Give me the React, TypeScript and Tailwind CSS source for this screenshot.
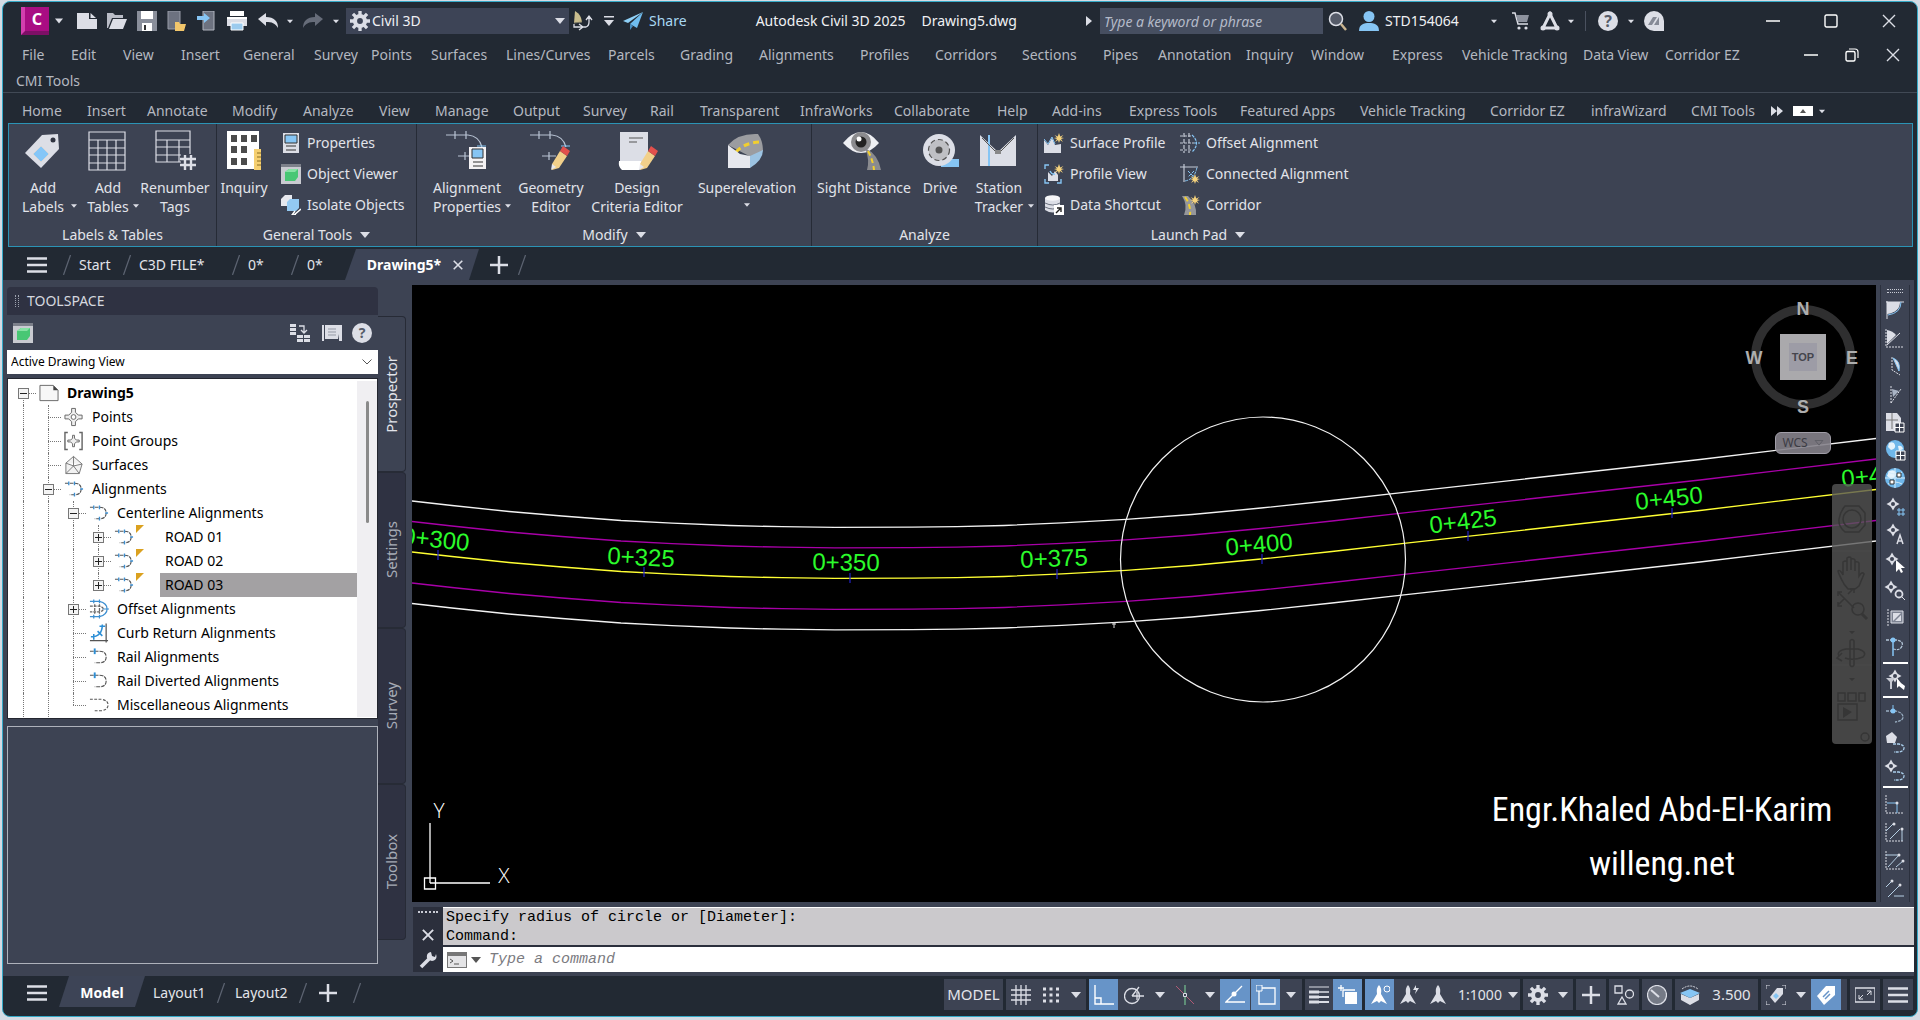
import React from "react";

type Kids = { children?: React.ReactNode };

const L = "#dcdee6";
const B = "#86c5f4";

function Svg({ box = "0 0 24 24", cls = "h-6 w-6", children }: Kids & { box?: string; cls?: string }) {
  return (
    <svg viewBox={box} className={`${cls} shrink-0`} fill="none" aria-hidden="true">
      {children}
    </svg>
  );
}

function Down({ cls = "w-2.5 h-1.5" }: { cls?: string }) {
  return (
    <svg viewBox="0 0 10 6" className={`${cls} shrink-0`} aria-hidden="true">
      <path d="M0 0H10L5 6Z" fill={L} />
    </svg>
  );
}

/* ---------- shared glyphs ---------- */

const Star = ({ x = 15, y = 5 }: { x?: number; y?: number }) => (
  <g transform={`translate(${x} ${y})`}>
    <path d="M0-5 1.2-1.6 4.4-3 2-.6 5 0 2 1 4 4 1 2 0 5-1 2-4 4-2 1-5 0-2-.6-4.4-3-1.2-1.6Z" fill="#f5d27c" />
  </g>
);

const Pt = ({ x, y }: { x: number; y: number }) => (
  <g transform={`translate(${x} ${y})`}>
    <path d="M0-6.500 2-3 3-2 6.500 0 3 2 2 3 0 6.500-2 3-3 2-6.500 0-3-2-2-3Z" fill={L} />
    <circle r="2" fill="#3d4353" />
  </g>
);

const Gear = ({ cls = "h-5 w-5" }: { cls?: string }) => (
  <Svg cls={cls}>
    <circle cx="12" cy="12" r="6" stroke={L} strokeWidth="5" />
    <path d="M12 0v5M12 19v5M0 12h5M19 12h5M3.500 3.500l3.600 3.600M16.900 16.900l3.600 3.600M20.500 3.500l-3.600 3.600M7.100 16.900l-3.600 3.600" stroke={L} strokeWidth="4" />
  </Svg>
);

const Burger = () => (
  <Svg box="0 0 20 16" cls="h-4 w-5">
    <path d="M0 1.500h20M0 8h20M0 14.500h20" stroke={L} strokeWidth="2.500" />
  </Svg>
);

const Plus = () => (
  <Svg box="0 0 18 18" cls="h-[18px] w-[18px]">
    <path d="M9 0v18M0 9h18" stroke={L} strokeWidth="2.500" />
  </Svg>
);

const Slash = () => (
  <Svg box="0 0 8 20" cls="h-5 w-2">
    <path d="M7.500 0 .5 20" stroke="#5d6472" strokeWidth="1.200" />
  </Svg>
);

const Close = ({ cls = "h-3.5 w-3.5", w = 1.4 }: { cls?: string; w?: number }) => (
  <Svg box="0 0 14 14" cls={cls}>
    <path d="M1 1l12 12M13 1 1 13" stroke={L} strokeWidth={w} />
  </Svg>
);

/* ---------- title bar ---------- */

function IconBtn({ label, w, children }: Kids & { label: string; w: string }) {
  return (
    <button aria-label={label} className={`flex h-full shrink-0 items-center justify-center ${w}`}>
      {children}
    </button>
  );
}

function TitleBar() {
  return (
    <header className="flex h-[38px] shrink-0 items-center text-sm text-[#f0f1f4]">
      <button aria-label="Application menu" className="ml-[18px] grid h-7 w-7 shrink-0 place-items-center border-b-4 border-l-4 border-b-[#7d0f66] border-l-[#d33fae] bg-[#a90d83] text-base font-bold leading-none text-white">
        C
      </button>
      <IconBtn label="Menu options" w="w-5"><Down cls="h-1.5 w-2" /></IconBtn>
      <IconBtn label="New" w="w-[30px] ml-[3px]">
        <Svg box="0 0 20 16" cls="h-4 w-5"><path d="M0 0h12v6h8v10H0Z" fill={L} /><path d="M13.500 0 19 5h-5.500Z" fill={L} /></Svg>
      </IconBtn>
      <IconBtn label="Open" w="w-[30px]">
        <Svg box="0 0 20 18" cls="h-[18px] w-5"><path d="M0 16V1h6l2 2h8v3H5L1 16Z" fill="#b9bcc6" /><path d="M6 7h14l-4 10H2Z" fill={L} /></Svg>
      </IconBtn>
      <IconBtn label="Save" w="w-[30px]">
        <Svg box="0 0 20 20" cls="h-5 w-5"><path d="M0 0h20v20H0Z" fill="#8a8f9b" /><path d="M4 0h12v8H4Z" fill="#fff" /><path d="M5 12h10v8H5Z" fill="#fff" /><path d="M7 14h2v5H7Z" fill="#333" /></Svg>
      </IconBtn>
      <IconBtn label="Open from web and mobile" w="w-[30px]">
        <Svg box="0 0 20 20" cls="h-5 w-5"><path d="M1 0h12v18H1Z" fill="#6d7280" stroke="#989ca8" /><path d="M8 11h4l1 2h6l-2 7H8Z" fill="#f2c66b" /></Svg>
      </IconBtn>
      <IconBtn label="Save to web and mobile" w="w-[30px]">
        <Svg box="0 0 20 20" cls="h-5 w-5"><path d="M6 0h11v19H6Z" fill="#6d7280" stroke="#b0b4be" /><path d="M0 5h7V2l6 5-6 5V9H0Z" fill={B} /></Svg>
      </IconBtn>
      <IconBtn label="Plot" w="w-[30px]">
        <Svg box="0 0 20 20" cls="h-5 w-5"><path d="M3 0h14v5H3Z" fill="#fff" /><path d="M0 6h20v9H0Z" fill={L} /><path d="M0 6h20v2H0Z" fill="#fff" /><path d="M4 12h12v7H4Z" fill="#9ccbee" stroke="#fff" /></Svg>
      </IconBtn>
      <IconBtn label="Undo" w="w-[32px]">
        <Svg box="0 0 20 16" cls="h-4 w-5"><path d="M0 6 8 0v4c8 0 12 4 12 11-3-5-6-6-12-6v4Z" fill={L} /></Svg>
      </IconBtn>
      <IconBtn label="Undo list" w="w-3"><Down cls="h-[5px] w-1.5" /></IconBtn>
      <IconBtn label="Redo" w="w-[34px]">
        <Svg box="0 0 20 16" cls="h-4 w-5"><path d="M20 6 12 0v4C4 4 0 8 0 15c3-5 6-6 12-6v4Z" fill="#666c79" /></Svg>
      </IconBtn>
      <IconBtn label="Redo list" w="w-3"><Down cls="h-[5px] w-1.5" /></IconBtn>
      <div className="relative ml-1 flex h-[26px] w-[223px] shrink-0 items-center bg-[#3d4456] pl-1">
        <Gear />
        <select aria-label="Workspace" className="h-full flex-1 appearance-none bg-transparent pl-0.5 text-sm text-[#f0f1f4]">
          <option>Civil 3D</option>
        </select>
        <span className="pointer-events-none absolute right-1"><Down /></span>
      </div>
      <IconBtn label="Customize north" w="w-7">
        <Svg box="0 0 20 20" cls="h-5 w-5"><path d="M2 0c5 3 6 6 7 11L1 12Z" fill="#c9bd8d" /><path d="M1 12l8-1" stroke="#7d7a66" /><path d="M1 13v3h8m-3-3 4 3-4 3M10 16h3q3-1 3-5V6m-3 3 3-4 3 4" stroke={L} strokeWidth="1.300" /></Svg>
      </IconBtn>
      <IconBtn label="Toolbar options" w="w-6">
        <Svg box="0 0 10 10" cls="h-2.5 w-2.5"><path d="M0 .8h10" stroke={L} strokeWidth="1.600" /><path d="M0 4h10L5 10Z" fill={L} /></Svg>
      </IconBtn>
      <button className="ml-0.5 flex shrink-0 items-center gap-1.5 text-[#a9d8f3]">
        <Svg box="0 0 20 18" cls="h-[18px] w-5"><path d="M20 0 0 9l5 2Z" fill="#8fd0f7" /><path d="M20 0 7 12l7 4Z" fill="#6fbdf0" /><path d="M7 12v6l3-4Z" fill="#4a90c4" /></Svg>
        Share
      </button>
      <div className="flex min-w-0 flex-1 items-center justify-center gap-4 whitespace-nowrap">
        <span>Autodesk Civil 3D 2025</span>
        <span>Drawing5.dwg</span>
      </div>
      <svg viewBox="0 0 6 10" className="mr-2 h-2.5 w-1.5 shrink-0" aria-hidden="true"><path d="M0 0v10l6-5Z" fill={L} /></svg>
      <input aria-label="Search help" placeholder="Type a keyword or phrase" className="h-[26px] w-[223px] shrink-0 bg-[#464e60] px-1 text-sm italic placeholder:text-[#b4bac8]" />
      <IconBtn label="Search" w="w-[30px]">
        <Svg box="0 0 20 20" cls="h-5 w-5"><circle cx="8" cy="8" r="6.500" fill="#555b69" stroke={L} strokeWidth="1.500" /><path d="m13 13 5 6" stroke="#c9b48f" strokeWidth="2.500" /></Svg>
      </IconBtn>
      <button className="flex w-36 shrink-0 items-center gap-1.5 pl-1.5">
        <Svg box="0 0 20 20" cls="h-5 w-5"><circle cx="10" cy="5.500" r="5.500" fill={B} /><path d="M0 20c0-7 5-8 10-8s10 1 10 8Z" fill={B} /></Svg>
        STD154064
        <span className="ml-auto"><Down cls="h-[5px] w-1.5" /></span>
      </button>
      <IconBtn label="App store" w="w-8 ml-2">
        <Svg box="0 0 18 18" cls="h-[18px] w-[18px]"><path d="M0 1h3l3 11h10" stroke={L} strokeWidth="1.500" /><path d="M4 3h13l-2 7H6Z" fill="#8d929e" /><circle cx="7" cy="16" r="1.600" fill={L} /><circle cx="14" cy="16" r="1.600" fill={L} /></Svg>
      </IconBtn>
      <IconBtn label="Autodesk" w="w-[26px]">
        <Svg box="0 0 20 20" cls="h-5 w-5"><path d="M10 3 17 17H3Z" stroke={L} strokeWidth="3" /><circle cx="10" cy="3" r="2.500" fill={L} /><circle cx="3" cy="17" r="2.500" fill={L} /><circle cx="17" cy="17" r="2.500" fill={L} /></Svg>
      </IconBtn>
      <IconBtn label="Autodesk options" w="w-4"><Down cls="h-[5px] w-1.5" /></IconBtn>
      <span className="mx-1.5 h-5 w-px bg-[#4a515f]" />
      <button aria-label="Help" className="ml-1.5 grid h-5 w-5 shrink-0 place-items-center rounded-full bg-[#dcdee6] text-base font-bold leading-none text-[#555b68]">?</button>
      <IconBtn label="Help options" w="w-[26px]"><Down cls="h-[5px] w-1.5" /></IconBtn>
      <button aria-label="Feedback" className="grid h-5 w-5 shrink-0 place-items-center rounded-full rounded-br-none bg-[#dcdee6]">
        <Svg box="0 0 12 8" cls="h-2 w-3"><path d="M0 8 5 0h4L4 8ZM6 8l5-8v8Z" fill="#858a96" /></Svg>
      </button>
      <IconBtn label="Minimize" w="ml-20 w-[58px]"><Svg box="0 0 14 14" cls="h-3.5 w-3.5"><path d="M0 7h14" stroke="#fff" strokeWidth="1.400" /></Svg></IconBtn>
      <IconBtn label="Maximize" w="w-[58px]"><Svg box="0 0 14 14" cls="h-3.5 w-3.5"><rect x="1" y="1" width="12" height="12" rx="1.500" stroke="#fff" strokeWidth="1.400" /></Svg></IconBtn>
      <IconBtn label="Close" w="w-[57px]"><Close /></IconBtn>
    </header>
  );
}

/* ---------- menus ---------- */

const MENUS: [string, string][] = [
  ["File", "w-[49px]"], ["Edit", "w-[52px]"], ["View", "w-[58px]"], ["Insert", "w-[62px]"], ["General", "w-[71px]"],
  ["Survey", "w-[57px]"], ["Points", "w-[60px]"], ["Surfaces", "w-[75px]"], ["Lines/Curves", "w-[102px]"], ["Parcels", "w-[72px]"],
  ["Grading", "w-[79px]"], ["Alignments", "w-[101px]"], ["Profiles", "w-[75px]"], ["Corridors", "w-[87px]"], ["Sections", "w-[81px]"],
  ["Pipes", "w-[55px]"], ["Annotation", "w-[88px]"], ["Inquiry", "w-[65px]"], ["Window", "w-[81px]"], ["Express", "w-[70px]"],
  ["Vehicle Tracking", "w-[121px]"], ["Data View", "w-[82px]"], ["Corridor EZ", "w-[90px]"],
];

function MenuBar() {
  return (
    <nav className="shrink-0 border-b border-[#414955] text-sm text-[#b4b8c0]">
      <div className="flex h-7 items-center pt-px pl-[19px]">
        {MENUS.map(([t, w]) => (
          <button key={t} className={`shrink-0 whitespace-nowrap text-left ${w}`}>{t}</button>
        ))}
        <div className="mr-1 ml-auto flex h-full shrink-0 items-center">
          <IconBtn label="Minimize drawing" w="w-10"><Svg box="0 0 14 14" cls="h-3.5 w-3.5"><path d="M0 7h14" stroke="#fff" strokeWidth="1.400" /></Svg></IconBtn>
          <IconBtn label="Restore drawing" w="w-[42px]"><Svg box="0 0 14 14" cls="h-3.5 w-3.5"><rect x="1" y="3.500" width="9" height="9.500" rx="1.500" stroke="#fff" strokeWidth="1.400" /><path d="M4 1h6q3 0 3 3v6" stroke="#fff" strokeWidth="1.200" /></Svg></IconBtn>
          <IconBtn label="Close drawing" w="w-10"><Close /></IconBtn>
        </div>
      </div>
      <div className="flex h-6 items-center pt-px pl-[13px]"><button>CMI Tools</button></div>
    </nav>
  );
}

const TABS: [string, string][] = [
  ["Home", "w-[65px]"], ["Insert", "w-[60px]"], ["Annotate", "w-[85px]"], ["Modify", "w-[71px]"], ["Analyze", "w-[76px]"],
  ["View", "w-[56px]"], ["Manage", "w-[78px]"], ["Output", "w-[70px]"], ["Survey", "w-[67px]"], ["Rail", "w-[50px]"],
  ["Transparent", "w-[100px]"], ["InfraWorks", "w-[94px]"], ["Collaborate", "w-[103px]"], ["Help", "w-[55px]"], ["Add-ins", "w-[77px]"],
  ["Express Tools", "w-[111px]"], ["Featured Apps", "w-[120px]"], ["Vehicle Tracking", "w-[130px]"], ["Corridor EZ", "w-[101px]"],
  ["infraWizard", "w-[100px]"], ["CMI Tools", "w-[80px]"],
];

function RibbonTabs() {
  return (
    <nav className="flex h-[30px] shrink-0 items-center pt-1.5 pl-[19px] text-sm text-[#b4b8c0]">
      {TABS.map(([t, w]) => (
        <button key={t} className={`shrink-0 whitespace-nowrap text-left ${w}`}>{t}</button>
      ))}
      <button aria-label="More tabs" className="flex items-center">
        <Svg box="0 0 12 10" cls="h-2.5 w-3"><path d="M0 0v10l6-5ZM6 0v10l6-5Z" fill={L} /></Svg>
      </button>
      <button aria-label="Minimize ribbon" className="ml-2.5 grid h-2.5 w-5 place-items-center bg-white">
        <Svg box="0 0 6 4" cls="h-1 w-1.5"><path d="M3 0 6 4H0Z" fill="#555" /></Svg>
      </button>
      <button aria-label="Ribbon options" className="ml-1.5"><Down cls="h-[5px] w-1.5" /></button>
    </nav>
  );
}

/* ---------- ribbon ---------- */

const pencil = <g><path d="M22 34 30 21l7 5-8 12-7 2Z" fill="#f2d08a" /><path d="m30 21 3-5 7 5-3 5Z" fill="#e2504c" /><path d="m22 34-1 6 5-3Z" fill="#e7e8ee" /></g>;
const arcLine = <g stroke="#b9c4d4" strokeWidth="1.200"><path d="M0 5h22M9 1v8M20 1v8M12 26h14M19 22v8" /><path d="M22 5q11 1 14 12" /><path d="M31 16h9" stroke={B} /></g>;

const big: Record<string, React.ReactNode> = {
  tag: <g><path d="M20 5 36 4l1 15-18 19L3 23Z" fill={L} /><path d="m19 16 8 8-8 8-8-8Z" fill="#85c6f7" stroke="#f2d9c4" strokeWidth=".6" /><circle cx="31" cy="10" r="2.500" fill="#2f3340" /></g>,
  table: <path d="M2 2h36v38H2ZM2 10h36M2 18h36M2 25h36M2 33h36M11 10v30M20 10v30M29 10v30" stroke={L} strokeWidth="1.200" />,
  renum: <g stroke={L} strokeWidth="1.200"><path d="M2 1h34v31H2ZM2 10h34M2 17h34M2 25h34M13 10v22M25 10v22" /><path d="M27 24h14v15H27Z" fill="#3d4353" stroke="none" /><path d="M31 25v15M37 25v15M26 29h16M26 35h16" strokeWidth="2.400" /></g>,
  calc: <g><path d="M4 1h32v38H4Z" fill="#fff" /><path d="M8 5h6v7H8ZM18 5h6v7h-6ZM28 5h6v7h-6ZM8 16h6v7H8ZM18 16h6v7h-6ZM8 28h6v7H8ZM18 28h6v7h-6Z" fill="#4b4b4b" /><path d="M31 19h7v21h-7Z" fill="#f5cf70" /><path d="M34 23h4M34 27h4M34 31h4M34 35h4" stroke="#8a6d20" /></g>,
  aprop: <g>{arcLine}<path d="M23 17h17v22H23Z" fill="#f4f2f4" /><path d="M26 19h11v9H26Z" fill={B} stroke="#333" /><path d="M27 32h10M27 36h10" stroke="#333" /></g>,
  geo: <g>{arcLine}{pencil}</g>,
  design: <g><path d="M4 2h28v30H8q-4 0-4 5Z" fill={L} /><path d="M3 31h22q2 7-2 9H6q-4-3-3-9Z" fill="#fff" /><path d="M13 8h14M13 12h8" stroke="#555" /><g transform="translate(2 0)">{pencil}</g></g>,
  superel: <g><path d="M2 15Q12 3 32 4q5 7 5 17l-12 6Z" fill="#9b9ca0" /><path d="M10 22q8-9 23-10" stroke="#f2cf2e" strokeWidth="3" strokeDasharray="6 4" /><path d="m2 15 12 9 10 2v12H2Z" fill="#e7e8ee" /><path d="m24 26 13-6q0 10-13 18Z" fill="#9cc3e2" /></g>,
  eye: <g><path d="M0 13Q18-9 36 13 18 33 0 13Z" fill="#eeeff3" /><circle cx="18" cy="12" r="10" fill="#8b8b8e" /><circle cx="18" cy="12" r="5.500" fill="#222" /><circle cx="16" cy="9" r="2.500" fill="#fff" /><path d="M22 18q13 6 16 22H24q3-10-2-22Z" fill="#8a8b8f" /><path d="M25 21q5 9 6 19" stroke="#f2cf2e" strokeWidth="2" strokeDasharray="5 3" /></g>,
  drive: <g><path d="M22 29h18v8H22Z" fill={B} /><circle cx="20" cy="20" r="16" fill={L} /><circle cx="20" cy="20" r="10.500" fill="#bfc0c4" stroke="#555" strokeWidth="1.200" strokeDasharray="5 3" /><circle cx="20" cy="20" r="3.500" fill="#555" /></g>,
  station: <g><path d="M2 5 20 22 38 5v31H2Z" fill={L} /><path d="M11 5v31" stroke={B} strokeWidth="2" /><path d="m4 8 14 14h4L36 8" stroke="#555" /><path d="M17 20h6v4h-6Z" fill="#888" /></g>,
};

function Big({ icon, a, b, w, arrow }: { icon: string; a: string; b?: string; w: string; arrow?: "side" | "below" }) {
  return (
    <button className={`relative flex shrink-0 flex-col items-center whitespace-nowrap pt-1.5 leading-[19px] ${w}`}>
      <Svg box="0 0 42 42" cls="h-[42px] w-[42px]">{big[icon]}</Svg>
      <span className="mt-1.5">{a}</span>
      {b && <span>{b}</span>}
      {arrow === "below" && <span className="mt-1.5"><Down cls="block h-1 w-1.5" /></span>}
      {arrow === "side" && <span className="absolute right-0 bottom-4"><Down cls="block h-1 w-1.5" /></span>}
    </button>
  );
}

const small: Record<string, React.ReactNode> = {
  props: <g><path d="M2 0h16v20H2Z" fill={L} /><path d="M4 2h12v8H4Z" fill={B} stroke="#333" /><path d="M5 13h10M5 17h10" stroke="#333" strokeWidth="1.200" /></g>,
  viewer: <g><path d="M0 0h20v20H0Z" fill="#c9cbd1" /><path d="M0 0h20v3H0Z" fill="#7c808a" /><path d="m4 8 4-3h9v8l-3 4H4Z" fill="#48c774" /><path d="m4 8 4-3h9l-3 3Z" fill="#86e2a4" /></g>,
  isolate: <g><path d="m0 4 4-4h7v6l-4 5H0Z" fill="#e7e8ee" /><path d="m6 7 3-3h9v9l-3 3H6Z" fill="#93c9f2" /><path d="m13 20 7-6m-6 2-3 4h4" stroke="#fff" strokeWidth="1.500" /></g>,
  sprof: <g><path d="M0 7l4 5 4-7 3 7 6-1v9H0Z" fill={L} /><path d="m0 6 4 5 4-7 3 7" stroke={B} /><Star /></g>,
  pview: <g><path d="M4 17V8l4 4 3-5 3 4v6Z" fill={L} /><path d="M1 5V1h4M1 15v4h4M13 19h4v-4M6 7q2 4 5 3" stroke={B} strokeWidth="1.400" /><Star /></g>,
  data: <g><path d="M1 3v12q8 5 15 0V3Z" fill={L} /><ellipse cx="8.500" cy="3" rx="7.500" ry="2.800" fill="#f6f6f8" /><path d="M1 8q8 4 15 0M1 12q8 4 15 0" stroke="#6a707e" /><path d="M10 10h10v10H10Z" fill="#fff" /><path d="m12 18 4-4m-3-1h4v4" stroke="#222" strokeWidth="1.400" /></g>,
  offset: <g stroke="#c4cad6" strokeWidth="1.200"><path d="M0 3h12M0 10h14M0 17h12" strokeDasharray="3 1" /><path d="M4 0v20M9 0v20" strokeDasharray="4 2" /><path d="M12 2q9 8 0 17M14 10h6" stroke={B} strokeDasharray="3 1" /></g>,
  conn: <g><path d="M0 3h18M4 0v18" stroke="#c4cad6" strokeWidth="1.200" /><path d="M5 17q10-2 12-14M8 7l6 6M14 7l-6 6" stroke={B} strokeDasharray="3 1" /><Star y={15} /></g>,
  corr: <g><path d="M2 1h6q9 8 8 19H4Q8 10 2 1Z" fill="#96979b" /><path d="M5 2q6 8 5 18" stroke="#f2cf2e" strokeWidth="2" strokeDasharray="5 3" /><Star /></g>,
};

function Small({ items, w }: { items: [string, string][]; w: string }) {
  return (
    <div className={`flex shrink-0 flex-col pt-[3px] ${w}`}>
      {items.map(([icon, t]) => (
        <button key={t} className="flex h-[31px] items-center gap-1.5 whitespace-nowrap">
          <Svg box="0 0 20 20" cls="h-5 w-5">{small[icon]}</Svg>
          {t}
        </button>
      ))}
    </div>
  );
}

function Panel({ title, w, arrow, children }: Kids & { title: string; w: string; arrow?: boolean }) {
  return (
    <section className={`flex flex-col border-r border-[#262b36] ${w}`}>
      <div className="flex min-h-0 flex-1">{children}</div>
      <button className="flex h-[22px] items-center justify-center gap-2">
        {title}
        {arrow && <Down />}
      </button>
    </section>
  );
}

function Ribbon() {
  return (
    <div className="mr-1 ml-[5px] flex h-[124px] shrink-0 border border-[#2b93b5] bg-[#3d4353] text-sm text-[#e2e4ea]">
      <Panel title="Labels & Tables" w="w-[208px] shrink-0">
        <Big icon="tag" a="Add" b="Labels" w="w-[68px]" arrow="side" />
        <Big icon="table" a="Add" b="Tables" w="w-[62px]" arrow="side" />
        <Big icon="renum" a="Renumber" b="Tags" w="w-[72px]" />
      </Panel>
      <Panel title="General Tools" w="w-[200px] shrink-0" arrow>
        <Big icon="calc" a="Inquiry" w="w-[54px]" />
        <Small w="ml-2.5 flex-1" items={[["props", "Properties"], ["viewer", "Object Viewer"], ["isolate", "Isolate Objects"]]} />
      </Panel>
      <Panel title="Modify" w="w-[395px] shrink-0" arrow>
        <Big icon="aprop" a="Alignment" b="Properties" w="ml-1.5 w-[88px]" arrow="side" />
        <Big icon="geo" a="Geometry" b="Editor" w="w-20" />
        <Big icon="design" a="Design" b="Criteria Editor" w="w-[92px]" />
        <Big icon="superel" a="Superelevation" w="w-32" arrow="below" />
      </Panel>
      <Panel title="Analyze" w="w-[226px] shrink-0">
        <Big icon="eye" a="Sight Distance" w="w-[104px]" />
        <Big icon="drive" a="Drive" w="w-12" />
        <Big icon="station" a="Station" b="Tracker" w="w-[70px]" arrow="side" />
      </Panel>
      <Panel title="Launch Pad" w="w-[320px] shrink-0 border-r-0" arrow>
        <Small w="ml-1.5 w-[136px]" items={[["sprof", "Surface Profile"], ["pview", "Profile View"], ["data", "Data Shortcut"]]} />
        <Small w="flex-1" items={[["offset", "Offset Alignment"], ["conn", "Connected Alignment"], ["corr", "Corridor"]]} />
      </Panel>
    </div>
  );
}

/* ---------- document tabs ---------- */

function DocTabs() {
  return (
    <nav className="flex h-[33px] shrink-0 items-center pt-0.5 pl-6 text-sm text-[#e2e4ea]">
      <button aria-label="File tab menu" className="w-9"><Burger /></button>
      <Slash />
      <button className="w-[52px] pl-2 text-left">Start</button>
      <Slash />
      <button className="w-[101px] pl-2 text-left whitespace-nowrap">C3D FILE*</button>
      <Slash />
      <button className="w-[51px] pl-2 text-left">0*</button>
      <Slash />
      <button className="w-[46px] pl-2 text-left">0*</button>
      <div className="relative flex h-full w-[134px] items-center justify-center gap-3 pl-1.5 font-bold text-white">
        <svg viewBox="0 0 134 31" preserveAspectRatio="none" className="absolute inset-0 h-full w-full" aria-hidden="true"><path d="M11 0H134L124 31H0Z" fill="#3d4456" /></svg>
        <span className="relative">Drawing5*</span>
        <button aria-label="Close tab" className="relative"><Close cls="h-2.5 w-2.5" w={2.2} /></button>
      </div>
      <button aria-label="New tab" className="ml-[11px] w-[28px]"><Plus /></button>
      <Slash />
    </nav>
  );
}

/* ---------- toolspace ---------- */

type Row = { t: string; d: number; icon: string; box?: "+" | "-"; mark?: boolean; sel?: boolean; last?: boolean };

const ROWS: Row[] = [
  { t: "Drawing5", d: 0, icon: "doc", box: "-" },
  { t: "Points", d: 1, icon: "pt" },
  { t: "Point Groups", d: 1, icon: "ptg" },
  { t: "Surfaces", d: 1, icon: "surf" },
  { t: "Alignments", d: 1, icon: "al", box: "-" },
  { t: "Centerline Alignments", d: 2, icon: "al", box: "-" },
  { t: "ROAD 01", d: 3, icon: "al", box: "+", mark: true },
  { t: "ROAD 02", d: 3, icon: "al", box: "+", mark: true },
  { t: "ROAD 03", d: 3, icon: "al", box: "+", mark: true, sel: true, last: true },
  { t: "Offset Alignments", d: 2, icon: "off", box: "+" },
  { t: "Curb Return Alignments", d: 2, icon: "curb" },
  { t: "Rail Alignments", d: 2, icon: "rail" },
  { t: "Rail Diverted Alignments", d: 2, icon: "rail" },
  { t: "Miscellaneous Alignments", d: 2, icon: "misc", last: true },
];

const hook = "M1 4h10q7 0 7 6t-7 6H6";
const treeIcons: Record<string, React.ReactNode> = {
  doc: <g><path d="M1 2h14l5 5v11H1Z" fill="#f7f7f7" stroke="#666" /><path d="M15 2v5h5Z" fill="#444" /></g>,
  pt: <g stroke="#666"><path d="M8 1h4v4l3 3h4v4h-4l-3 3v4H8v-4l-3-3H1V8h4l3-3Z" fill="#eee" /><circle cx="10" cy="10" r="2.500" fill="#fff" /></g>,
  ptg: <g stroke="#666"><path d="M4 1H1v18h3M16 1h3v18h-3" strokeWidth="1.500" /><path d="M9 4h2v3l2 2h3v2h-3l-2 2v3H9v-3l-2-2H4V9h3l2-2Z" fill="#eee" /></g>,
  surf: <path d="m10 1 9 8-3 10H2V8ZM10 1v10M2 8l8 3 9-2M10 11 2 19M10 11l6 8" fill="#f2f2f2" stroke="#777" />,
  al: <g><path d={hook} stroke="#555" strokeWidth="1.200" strokeDasharray="4 1" /><path d="M5 2v4M11 2v4M17 10h3M11 14v4" stroke="#3d8fd1" strokeWidth="1.400" /></g>,
  off: <g strokeWidth="1.300"><path d="M1 2h10q8 2 8 8t-8 8H1M5 0v4M11 0v4M5 16v4M11 16v4M14 10h7" stroke="#3d8fd1" /><path d="M1 7h10q4 1 4 3t-4 3H1M6 5v10M11 5v10" stroke="#666" strokeDasharray="3 1" /></g>,
  curb: <g strokeWidth="1.300"><path d="M1 18h19M18 0v20" stroke="#555" /><path d="M2 14q12 0 12-13M5 11v6M11 3h6M9 8l5 5" stroke="#2d8fd6" strokeWidth="1.600" /></g>,
  rail: <g><path d={hook} stroke="#555" strokeWidth="1.200" strokeDasharray="4 1" /><path d="M6 1v6" stroke="#2d8fd6" strokeWidth="2" /></g>,
  misc: <path d="M1 4h12q7 1 7 6t-7 6H6" stroke="#555" strokeWidth="1.200" strokeDasharray="3 1.500" />,
};

function TreeRow({ r }: { r: Row }) {
  const guides = [];
  for (let i = 0; i < r.d; i++) {
    guides.push(
      <span key={i} className="flex w-[25px] shrink-0 justify-center">
        <span className="h-full w-px border-l border-dotted border-[#777]" />
      </span>,
    );
  }
  const vertical = r.d === 0 ? "top-1/2 h-1/2" : r.last ? "top-0 h-1/2" : "top-0 h-full";
  return (
    <li className="flex h-6 shrink-0">
      {guides}
      <span className="relative flex w-[25px] shrink-0 items-center justify-center">
        <span className={`absolute left-3 w-px border-l border-dotted border-[#777] ${vertical}`} />
        <span className="absolute top-3 right-0 left-3 border-t border-dotted border-[#777]" />
        {r.box && (
          <button aria-label={`Toggle ${r.t}`} className="relative grid h-[11px] w-[11px] place-items-center border border-[#777] bg-[#f4f4f4]">
            <Svg box="0 0 7 7" cls="h-[7px] w-[7px]">
              <path d={r.box === "+" ? "M0 3.500h7M3.500 0v7" : "M0 3.500h7"} stroke="#222" />
            </Svg>
          </button>
        )}
      </span>
      <span className="flex w-[25px] shrink-0 items-center justify-center"><Svg box="0 0 21 20" cls="h-5 w-5">{treeIcons[r.icon]}</Svg></span>
      {r.mark && (
        <span className="w-6 shrink-0"><Svg box="0 0 8 8" cls="h-2 w-2"><path d="M0 0h8L0 8Z" fill="#dba11f" /></Svg></span>
      )}
      <span className={`flex flex-1 items-center whitespace-nowrap ${r.mark ? "pl-[5px]" : "pl-1.5"} ${r.sel ? "bg-[#a3a1a3]" : ""} ${r.d === 0 ? "font-bold" : ""}`}>{r.t}</span>
    </li>
  );
}

const SIDE: [string, boolean, string][] = [
  ["Prospector", true, "text-[#e2e4ea]"],
  ["Settings", false, "text-[#a6abb6]"],
  ["Survey", false, "text-[#a6abb6]"],
  ["Toolbox", false, "text-[#a6abb6]"],
];

function Toolspace() {
  return (
    <aside className="flex shrink-0 pb-3 pl-1">
      <div className="flex w-[371px] flex-col pt-[7px]">
        <h2 className="flex h-7 shrink-0 items-center gap-2 rounded-t bg-[#2f3242] pl-2 text-sm text-[#d5d8df]">
          <span className="h-3 w-1 border-x border-dotted border-[#9da2ae]" />
          TOOLSPACE
        </h2>
        <div className="flex h-[35px] shrink-0 items-center px-1.5">
          <button aria-label="Item view"><Svg box="0 0 20 20" cls="h-5 w-5">{small.viewer}</Svg></button>
          <button aria-label="Panorama" className="ml-auto"><Svg box="0 0 20 20" cls="h-5 w-5"><path d="M0 1h6v3H0ZM0 5h6v3H0ZM0 9h6v3H0ZM7 12h6v3H7ZM14 12h6v3h-6ZM7 16h6v3H7ZM14 16h6v3h-6Z" fill={L} /><path d="M9 3h5v7m-3-3 3 3 3-3" stroke={L} strokeWidth="1.300" /></Svg></button>
          <button aria-label="Toolspace tree" className="ml-3"><Svg box="0 0 20 16" cls="h-4 w-5"><path d="M0 0h2v16H0ZM3 0h17v16h-3V9l-1 5H3Z" fill={L} /><path d="M6 4h8M6 7h8M6 10h8" stroke="#9499a5" /></Svg></button>
          <button aria-label="Toolspace help" className="ml-2.5 grid h-5 w-5 place-items-center rounded-full bg-[#dcdee6] text-sm font-bold leading-none text-[#555b68]">?</button>
        </div>
        <div className="relative flex h-6 shrink-0 items-center bg-white text-xs text-black">
          <select aria-label="Drawing view" className="h-full w-full appearance-none bg-transparent pl-1">
            <option>Active Drawing View</option>
          </select>
          <svg viewBox="0 0 10 6" className="pointer-events-none absolute right-1.5 h-1.5 w-2.5" fill="none" aria-hidden="true"><path d="m.5.5 4.500 4.500L9.500.5" stroke="#555" /></svg>
        </div>
        <div className="mt-1 flex shrink-0 border border-[#23262f] bg-white pt-0.5 pb-px text-sm text-black">
          <ul className="flex flex-1 flex-col pl-[3px]">
            {ROWS.map((r) => <TreeRow key={r.t} r={r} />)}
          </ul>
          <div className="flex w-5 justify-center bg-[#f0eff2] pt-5"><span className="h-[122px] w-[3px] rounded bg-[#8a8a8a]" /></div>
        </div>
        <div className="mt-[7px] min-h-0 flex-1 border border-[#aeb2bb]" />
      </div>
      <div className="flex w-7 flex-col pt-9 pb-6">
        {SIDE.map(([t, on, c]) => (
          <button key={t} className={`flex flex-1 items-center justify-center rounded-r border border-l-0 border-[#272b36] text-[15px] ${on ? "bg-[#3d4353]" : "bg-[#2f3242]"} ${c}`}>
            <span className="rotate-180 [writing-mode:vertical-rl]">{t}</span>
          </button>
        ))}
      </div>
    </aside>
  );
}

/* ---------- drawing area ---------- */

const EDGE = "0,216 40,220.500 97,226.500 150,231 209,235.500 260,238.200 318,240.500 370,241.700 423,242.300 500,242.200 545,241.700 592,240.500 650,237.800 714,234.300 780,229.500 849,223 920,215.500 992,207.300 1288,174.500 1464,153.500";

const LINES: [number, string][] = [
  [0, "#f2f2f2"], [20.5, "#a800a8"], [51, "#ffff33"], [82, "#a800a8"], [102.5, "#f2f2f2"],
];

const STATIONS: [string, number, number, number][] = [
  ["0+300", 24, 254, 6], ["0+325", 229, 272, 3], ["0+350", 434, 277, 1], ["0+375", 642, 273, -2],
  ["0+400", 847, 259, -5], ["0+425", 1051, 236, -7], ["0+450", 1257, 213, -6], ["0+475", 1463, 190, -6],
];

const TICKS: [number, number][] = [[26, 270], [232, 287], [438, 293], [645, 289], [850, 274], [1056, 251], [1260, 228]];

function Drawing() {
  return (
    <svg viewBox="0 0 1464 617" preserveAspectRatio="xMinYMin slice" className="absolute inset-0 h-full w-full" role="img" aria-label="Road alignment plan" fill="none">
      {LINES.map(([dy, c], i) => (
        <polyline key={i} points={EDGE} transform={`translate(0 ${dy})`} stroke={c} strokeWidth="1.300" />
      ))}
      {TICKS.map(([x, y]) => <path key={x} d={`M${x} ${y - 5}v10`} stroke="#2222c8" strokeWidth="1.200" />)}
      <g fill="#2bfb2b" fontFamily="Liberation Sans, sans-serif" fontSize="24" textAnchor="middle">
        {STATIONS.map(([t, x, y, a]) => (
          <text key={t} x={x} y={y} transform={`rotate(${a} ${x} ${y})`} dominantBaseline="central">{t}</text>
        ))}
      </g>
      <circle cx="851" cy="274.500" r="142.500" stroke="#f2f2f2" strokeWidth="1.200" />
      <path d="M700 339h4M702 337v6" stroke="#ddd" />
      <path d="M18 598V538M18 598H78M12.500 593h11v11h-11Z" stroke="#fff" strokeWidth="1.300" />
      <g fill="#fff" fontFamily="Open Sans, sans-serif" fontWeight="300" fontSize="21" textAnchor="middle">
        <text x="27" y="533">Y</text>
        <text x="92" y="598">X</text>
      </g>
    </svg>
  );
}

function ViewCube() {
  return (
    <svg viewBox="0 0 120 150" className="absolute top-[14px] right-[13px] h-[150px] w-[120px]" fill="none" role="img" aria-label="View cube">
      <circle cx="60" cy="58" r="47.500" stroke="#2f2f30" strokeWidth="9" />
      <rect x="37" y="35" width="46" height="46" fill="#aaa9ac" />
      <rect x="46" y="44" width="28" height="28" fill="#9d9ca6" />
      <g fontFamily="Liberation Sans, sans-serif" fontWeight="700" textAnchor="middle" fill="#aeaeae" fontSize="18">
        <text x="60" y="16">N</text>
        <text x="60" y="114">S</text>
        <text x="11" y="65">W</text>
        <text x="109" y="65">E</text>
        <text x="60" y="62" fontSize="11" fill="#45454d">TOP</text>
      </g>
    </svg>
  );
}

function NavBar() {
  return (
    <svg viewBox="0 0 40 260" className="absolute top-[199px] right-1 h-[260px] w-10" fill="none" role="img" aria-label="Navigation bar">
      <rect width="40" height="260" rx="4" fill="#565656" fillOpacity=".8" />
      <path d="M0 67h40M0 181h40" stroke="#4b4b4b" />
      <g stroke="#363636" strokeWidth="1.500">
        <path d="M13 22h14l6 7v12l-6 7H13q-7-6-6-13t6-13Z" />
        <circle cx="20" cy="35" r="9" />
        <path d="M12 100q-5-9-6-13 2-2 5 4V78q3-2 4 0v9-13q3-2 4 0v12-11q3-1 4 1v11-9q3-1 4 1v13q3-5 5-2l-5 12-4 3h-7Z" />
        <path d="m6 108 16 16m-16-3 6-6m4-5 5-5M6 112v-4h4M22 109v-4h-4M6 118v4h4" /><circle cx="26" cy="125" r="6" /><path d="m30 130 5 5" strokeWidth="3" />
        <path d="M18 157q2-3 4 0v24q-2 3-4 0ZM7 172q-3-5 7-7h12q10 3 5 8-10 4-18 1m-3-5-5 5 5 3" />
        <path d="M6 209h7v8H6ZM16 209h8v8h-8ZM27 209h6v8h-6ZM6 220h19v16H6Z" />
        <circle cx="33" cy="253" r="4" />
      </g>
      <path d="M11 223v11l9-6ZM17 147h6l-3 3ZM17 194h6l-3 3Z" fill="#363636" />
    </svg>
  );
}

function Canvas() {
  return (
    <div className="relative min-w-0 flex-1 overflow-hidden bg-black">
      <Drawing />
      <ViewCube />
      <button className="absolute top-[147px] right-[45px] flex h-[22px] w-14 items-center justify-center gap-1.5 rounded-md border border-[#a19ea8] bg-[#85828b]/90 text-xs text-[#3c3c44]">
        WCS
        <svg viewBox="0 0 10 7" className="h-1.5 w-2.5" fill="none" aria-hidden="true"><path d="M.5.5h9L5 6Z" stroke="#5b5b63" /></svg>
      </button>
      <NavBar />
      <div className="absolute right-[42px] bottom-3 flex w-[344px] flex-col items-center whitespace-nowrap font-['Roboto_Condensed','Roboto',sans-serif] text-[34px] leading-[54px] text-white">
        <span>Engr.Khaled Abd-El-Karim</span>
        <span>willeng.net</span>
      </div>
    </div>
  );
}

/* ---------- transparent commands strip ---------- */

const corner = <path d="M2 2v18h18" stroke={L} strokeDasharray="2 1" />;
const tail = <path d="M9 13h6q5 1 5 4t-5 4h-5" stroke="#a9cdea" strokeWidth="1.300" strokeDasharray="3 1" />;
const STRIP: [string, React.ReactNode][] = [
  ["Angle distance", <g><path d="M2 3h18M3 2v18" stroke={L} /><path d="M3 3h13q0 10-13 12Z" fill={L} /><path d="M17 3q0 11-13 13" stroke={B} /></g>],
  ["Bearing distance", <g><path d="M2 2v18h18" stroke={L} strokeDasharray="2 1" /><path d="M3 17V3q6 1 9 5Z" fill={L} /><path d="m3 18 13-12" stroke={L} /></g>],
  ["Azimuth distance", <g><path d="M8 2v13l8 5" stroke={L} strokeDasharray="2 1" /><path d="M9 3q8 3 6 13Z" fill={L} stroke={B} /></g>],
  ["Deflection distance", <g><path d="M7 3v17M7 20 17 6" stroke={L} strokeDasharray="2 1" /><path d="m8 6 7 2-6 6Z" fill="#a9b3c4" /></g>],
  ["Northing easting", <g><path d="M2 2h11l4 5v13H2Z" fill={L} /><path d="M2 9h12M8 2v16" stroke="#777" /><path d="M11 12h9v9h-9ZM11 16.500h9M15.500 12v9" fill="#3d4353" stroke="#fff" /></g>],
  ["Grid northing easting", <g><circle cx="11" cy="10" r="9" fill="#6fb7ea" /><path d="M5 4q5-2 6 2t-4 5l-3-3ZM14 7q4-1 5 3l-4 2Z" fill="#e5f3fc" /><path d="M12 12h9v9h-9ZM12 16.500h9M16.500 12v9" fill="#3d4353" stroke="#fff" /></g>],
  ["Latitude longitude", <g><circle cx="11" cy="11" r="10" fill="#6fb7ea" /><path d="M5 4q6-2 7 2t-5 6l-4-3Z" fill="#e5f3fc" /><path d="M1 11h20M11 1v20M4 5q7 4 14 0M4 17q7-4 14 0" stroke="#d5ebf9" /><path d="M13 6h4v4h-4ZM6 13h4v4H6Z" fill="#fff" stroke="#333" /></g>],
  ["Point number", <g><Pt x={9} y={9} /><path d="M15 13v8M19 13v8M13 15h8M13 19h8" stroke={B} /></g>],
  ["Point name", <g><Pt x={9} y={7} /><path d="m13 21 3-9 3 9M14 18h4" stroke={L} strokeWidth="1.500" /></g>],
  ["Point object", <g><Pt x={8} y={8} /><path d="M12 9v12l3-3 2 4 2-1-2-4h4Z" fill="#fff" /></g>],
  ["Zoom to point", <g><Pt x={7} y={8} /><circle cx="15" cy="15" r="3.500" stroke={L} strokeWidth="1.800" /><path d="m18 18 3 3" stroke={L} /></g>],
  ["Side shot", <g><path d="M4 2v18" stroke={L} strokeDasharray="2 1" /><path d="M7 4h12v12H7Z" stroke="#dcdee6" fill="#7d8392" /><path d="M9 6h8l-8 8ZM17 8v6h-6Z" fill="#dcdee6" /></g>],
  ["Station offset", <g><path d="M2 5h10q8 1 6 6-2 5-9 3" stroke="#b4c6d8" strokeWidth="1.300" strokeDasharray="3 1" /><path d="M9 5v16" stroke={B} strokeWidth="1.500" /><circle cx="9" cy="5" r="2.500" fill={B} /></g>],
  ["Filter point", <g><Pt x={11} y={7} /><path d="M2 9h9l-3 4v7H6v-7Z" fill="#c7cad3" /><path d="M13 9v10l2-2 5 4 1-4-4-3Z" fill="#fff" /></g>],
  ["Profile station", <g><path d="M2 8h10q7 2 7 6t-8 5" stroke="#9bb0c4" strokeWidth="1.300" strokeDasharray="3 1" /><path d="M9 2v7" stroke={B} /><circle cx="9" cy="8" r="2.500" fill={B} /></g>],
  ["Profile surface", <g><path d="m2 5 6-4 5 5-2 6H3Z" fill={L} />{tail}</g>],
  ["Profile point", <g><Pt x={7} y={7} />{tail}</g>],
  ["Grade station", <g>{corner}<path d="M3 10h10v10" stroke={B} /><circle cx="13" cy="10" r="1.500" fill={L} /></g>],
  ["Grade elevation", <g>{corner}<path d="m2 10 8-8M18 8v12M6 18 16 8" stroke="#b6cfe4" /><circle cx="10" cy="3" r="1.500" fill={L} /><circle cx="18" cy="8" r="1.500" fill={L} /></g>],
  ["Grade length", <g>{corner}<path d="M2 6h13M4 18 15 6M12 18l7-6" stroke="#b6cfe4" /><circle cx="15" cy="6" r="1.500" fill={L} /><circle cx="19" cy="12" r="1.500" fill={L} /></g>],
  ["Slope length", <g><path d="m2 10 7-7M4 20 16 8M10 19h10" stroke="#b6cfe4" /><circle cx="8" cy="4" r="1.500" fill={L} /><circle cx="16" cy="8" r="1.500" fill={L} /></g>],
];

function Strip() {
  return (
    <div className="ml-1 flex w-[30px] shrink-0 flex-col items-center overflow-hidden border-x border-[#2b303d] pt-1">
      <span className="mb-[3px] h-1 w-4 shrink-0 border-y border-dotted border-[#c9ccd5]" />
      {STRIP.map(([t, icon], i) => (
        <React.Fragment key={t}>
          <button aria-label={t} className="grid h-7 shrink-0 place-items-center"><Svg box="0 0 22 22" cls="h-[22px] w-[22px]">{icon}</Svg></button>
          {(i === 12 || i === 13 || i === 16) && <span className="my-0.5 h-0.5 w-[25px] shrink-0 bg-white" />}
        </React.Fragment>
      ))}
    </div>
  );
}

function Command() {
  return (
    <div className="mt-[5px] mb-1 ml-px flex h-[65px] shrink-0 bg-[#2b2f3c]">
      <div className="flex w-[30px] flex-col items-center pt-1 text-white">
        <span className="h-1 w-5 border-t-2 border-dotted border-[#c9ccd5]" />
        <button aria-label="Close command line" className="mt-3.5"><Close cls="h-3 w-3" w={2.2} /></button>
        <button aria-label="Customize" className="mt-2.5">
          <Svg box="0 0 18 18" cls="h-[18px] w-[18px]"><path d="m2 16 8-8" stroke={L} strokeWidth="3.500" /><path d="M8 7q-1-5 4-6l1 4 3 1 1-3q2 6-4 7-3 0-5-3Z" fill={L} /></Svg>
        </button>
      </div>
      <div className="flex min-w-0 flex-1 flex-col font-['Liberation_Mono',monospace] text-[15px]">
        <div className="flex h-[38px] flex-col justify-center border-t border-white bg-[#cbc9cc] pl-[3px] leading-[19px] text-black">
          <p>Specify radius of circle or [Diameter]:</p>
          <p>Command:</p>
        </div>
        <div className="mt-0.5 flex flex-1 items-center bg-white pl-1">
          <button aria-label="Recent commands" className="flex items-center gap-1">
            <Svg box="0 0 20 16" cls="h-4 w-5"><rect x=".5" y=".5" width="19" height="15" fill="#e4e4e6" stroke="#777" /><path d="M0 0h20v4H0Z" fill="#777" /><path d="m3 7 3 2-3 2M7 12h5" stroke="#555" /></Svg>
            <svg viewBox="0 0 10 6" className="h-1.5 w-2.5" aria-hidden="true"><path d="M0 0h10L5 6Z" fill="#555" /></svg>
          </button>
          <input aria-label="Command" placeholder="Type a command" className="h-full min-w-0 flex-1 bg-transparent pl-2 italic placeholder:text-[#7b7b7f]" />
        </div>
      </div>
    </div>
  );
}

/* ---------- status bar ---------- */

function Cell({ label, w = "w-[30px]", on, children }: Kids & { label: string; w?: string; on?: boolean }) {
  return (
    <button aria-label={label} className={`grid h-full shrink-0 place-items-center ${w} ${on ? "bg-[#6794c8]" : ""}`}>{children}</button>
  );
}

function Group({ children }: Kids) {
  return <div className="flex h-[31px] shrink-0 items-center bg-[#3d4353]">{children}</div>;
}

const S = ({ children }: Kids) => <Svg box="0 0 20 20" cls="h-5 w-5">{children}</Svg>;
const arrowShape = "M10 0q3 3 2 9l6 10-6-3-2 2-2-2-6 3 6-10Q7 3 10 0Z";

function StatusBar() {
  return (
    <footer className="flex h-10 shrink-0 items-start text-sm text-[#e2e4ea]">
      <nav className="flex h-[33px] items-center pl-6">
        <button aria-label="Layout menu" className="w-8"><Burger /></button>
        <button className="relative grid h-full w-[86px] place-items-center font-bold text-white">
          <svg viewBox="0 0 86 33" preserveAspectRatio="none" className="absolute inset-0 h-full w-full" aria-hidden="true"><path d="M10 0H86L76 31H0Z" fill="#3d4456" /></svg>
          <span className="relative">Model</span>
        </button>
        <button className="w-[72px] pl-2 text-left">Layout1</button>
        <Slash />
        <button className="w-[74px] pl-2.5 text-left">Layout2</button>
        <Slash />
        <button aria-label="New layout" className="w-[46px] pl-3"><Plus /></button>
        <Slash />
      </nav>
      <div className="mt-[3px] mr-1 ml-auto flex items-center gap-[3px]">
        <Group><Cell label="Model space" w="w-[59px]"><span className="text-[15px]">MODEL</span></Cell></Group>
        <Group>
          <Cell label="Grid"><S><path d="M5 0v20M10 0v20M15 0v20M0 5h20M0 10h20M0 15h20" stroke={L} strokeWidth="1.300" /></S></Cell>
          <Cell label="Snap"><S><path d="M2 4h16M2 10h16M2 16h16" stroke={L} strokeWidth="3" strokeDasharray="3 3.500" /></S></Cell>
          <Cell label="Snap options" w="w-5"><Down /></Cell>
        </Group>
        <Group>
          <Cell label="Ortho" on w="w-[29px]"><S><path d="M1 0v19h19M1 13h6v6" stroke="#fff" strokeWidth="1.400" /></S></Cell>
          <Cell label="Polar tracking" w="w-8"><S><circle cx="8" cy="11" r="7.500" stroke={L} strokeWidth="1.300" /><path d="M8 11h12M8 11l7-9M13 7v8" stroke={L} strokeWidth="1.300" /></S></Cell>
          <Cell label="Polar options" w="w-5"><Down /></Cell>
          <Cell label="Isometric"><S><path d="m1 1 18 18" stroke="#b05a75" /><path d="M10 0v20" stroke="#72b98c" strokeWidth="1.300" /><path d="M8.500 8.500h3v3h-3Z" stroke={L} fill="#3d4353" /></S></Cell>
          <Cell label="Isometric options" w="w-5"><Down /></Cell>
          <Cell label="Object snap tracking" on w="w-[30px]"><S><path d="M20 17H1L17 1" stroke="#fff" strokeWidth="1.300" /><circle cx="9" cy="9" r="2.500" fill="#fff" /></S></Cell>
          <Cell label="Object snap" on w="ml-px w-[29px]"><S><path d="M3 3h16v16H3Z" stroke="#fff" strokeWidth="1.300" /><path d="M0 0h6v6H0Z" stroke="#fff" fill="#6794c8" /></S></Cell>
          <Cell label="Object snap options" w="w-[22px]"><Down /></Cell>
        </Group>
        <Group>
          <Cell label="Lineweight" w="w-[28px]"><S><path d="M0 2h20" stroke={L} /><path d="M0 7h20" stroke={L} strokeWidth="1.500" /><path d="M0 7h10M0 12h10M0 17h10" stroke={L} strokeWidth="3" /><path d="M10 12h10M10 17h10" stroke={L} strokeWidth="2" /></S></Cell>
          <Cell label="Transparency" on w="w-[29px]"><S><path d="M3 0v6M0 3h6M5 12V5h12" stroke="#fff" strokeWidth="1.300" /><path d="M7 7h12v12H7Z" fill="#fff" /></S></Cell>
        </Group>
        <Group>
          <Cell label="Annotation visibility" on w="w-[29px]"><S><path d={arrowShape} fill="#fff" transform="translate(-1 0)" /><circle cx="17" cy="4" r="3" stroke="#fff" /></S></Cell>
          <Cell label="Auto scale" w="w-[29px]"><S><path d={arrowShape} fill={L} transform="translate(-1 0)" /><path d="m17 0-3 5h3l-1 4 4-6h-3Z" fill={L} /></S></Cell>
          <Cell label="Annotation scale icon" w="w-[29px]"><S><path d={arrowShape} fill={L} /></S></Cell>
          <button className="flex h-full w-[68px] items-center justify-center gap-1.5 whitespace-nowrap pl-1">1:1000<Down /></button>
        </Group>
        <Group>
          <Cell label="Workspace switching"><Gear /></Cell>
          <Cell label="Workspace options" w="w-5"><Down /></Cell>
        </Group>
        <Group><Cell label="Annotation monitor"><Plus /></Cell></Group>
        <Group><Cell label="Isolate objects"><S><path d="M1 1h7v7H1Z" stroke={L} strokeWidth="1.300" /><circle cx="15.500" cy="9" r="4" stroke={L} strokeWidth="1.300" /><path d="m8 12 4 7H4Z" stroke={L} strokeWidth="1.300" /></S></Cell></Group>
        <Group><Cell label="Graphics performance"><S><circle cx="10" cy="10" r="9.500" fill="#757a86" stroke={L} strokeWidth="1.200" /><path d="m4 5 8 7" stroke={L} strokeWidth="2" /></S></Cell></Group>
        <Group>
          <Cell label="Elevation"><S><path d="M2 4q8-6 16 0" stroke={L} strokeDasharray="2 1" /><path d="M1 9v6l9 5 9-5V9l-9 4Z" fill={L} /><path d="m0 8 10-4 10 4-10 5Z" fill={B} /></S></Cell>
          <button className="h-full w-[53px] text-[15px]">3.500</button>
        </Group>
        <Group>
          <Cell label="Label style"><S><path d="M0 4V0h4M16 0h4v4M20 16v4h-4M4 20H0v-4" stroke={L} /><path d="m11 3 6 0v6l-8 9-5-6Z" fill={L} /><path d="m10 8 3 3-3 3-3-3Z" fill={B} /></S></Cell>
          <Cell label="Label options" w="w-5"><Down /></Cell>
          <Cell label="Labels" on><S><path d="M10 1h9v9L8 20 1 11Z" fill="#fff" /><path d="m7 12 6-6M9 14l5-5" stroke="#6794c8" strokeWidth="1.500" /></S></Cell>
          <span className="ml-0.5 w-1" />
        </Group>
        <Group><Cell label="Clean screen"><S><path d="M0 3h20v14H0Z" stroke={L} strokeWidth="1.300" /><path d="m4 14 4-4M4 10v4h4M16 6l-4 4M12 6h4v4" stroke={L} /></S></Cell></Group>
        <Group><Cell label="Customization"><Burger /></Cell></Group>
      </div>
    </footer>
  );
}

export default function App() {
  return (
    <div className="flex h-screen flex-col bg-[#d5dbe4] pt-px pr-0.5 pb-[3px] pl-0.5 font-['Noto_Sans','Open_Sans',sans-serif]">
      <div className="flex min-h-0 flex-1 flex-col overflow-hidden rounded-lg border border-[#35a9c7] bg-[#222933]">
        <TitleBar />
        <MenuBar />
        <RibbonTabs />
        <Ribbon />
        <DocTabs />
        <main className="mr-[3px] flex min-h-0 flex-1 bg-[#3d4353]">
          <Toolspace />
          <div className="ml-1.5 flex min-w-0 flex-1 flex-col pt-[5px]">
            <div className="mr-1 flex min-h-0 flex-1">
              <Canvas />
              <Strip />
            </div>
            <Command />
          </div>
        </main>
        <StatusBar />
      </div>
    </div>
  );
}
